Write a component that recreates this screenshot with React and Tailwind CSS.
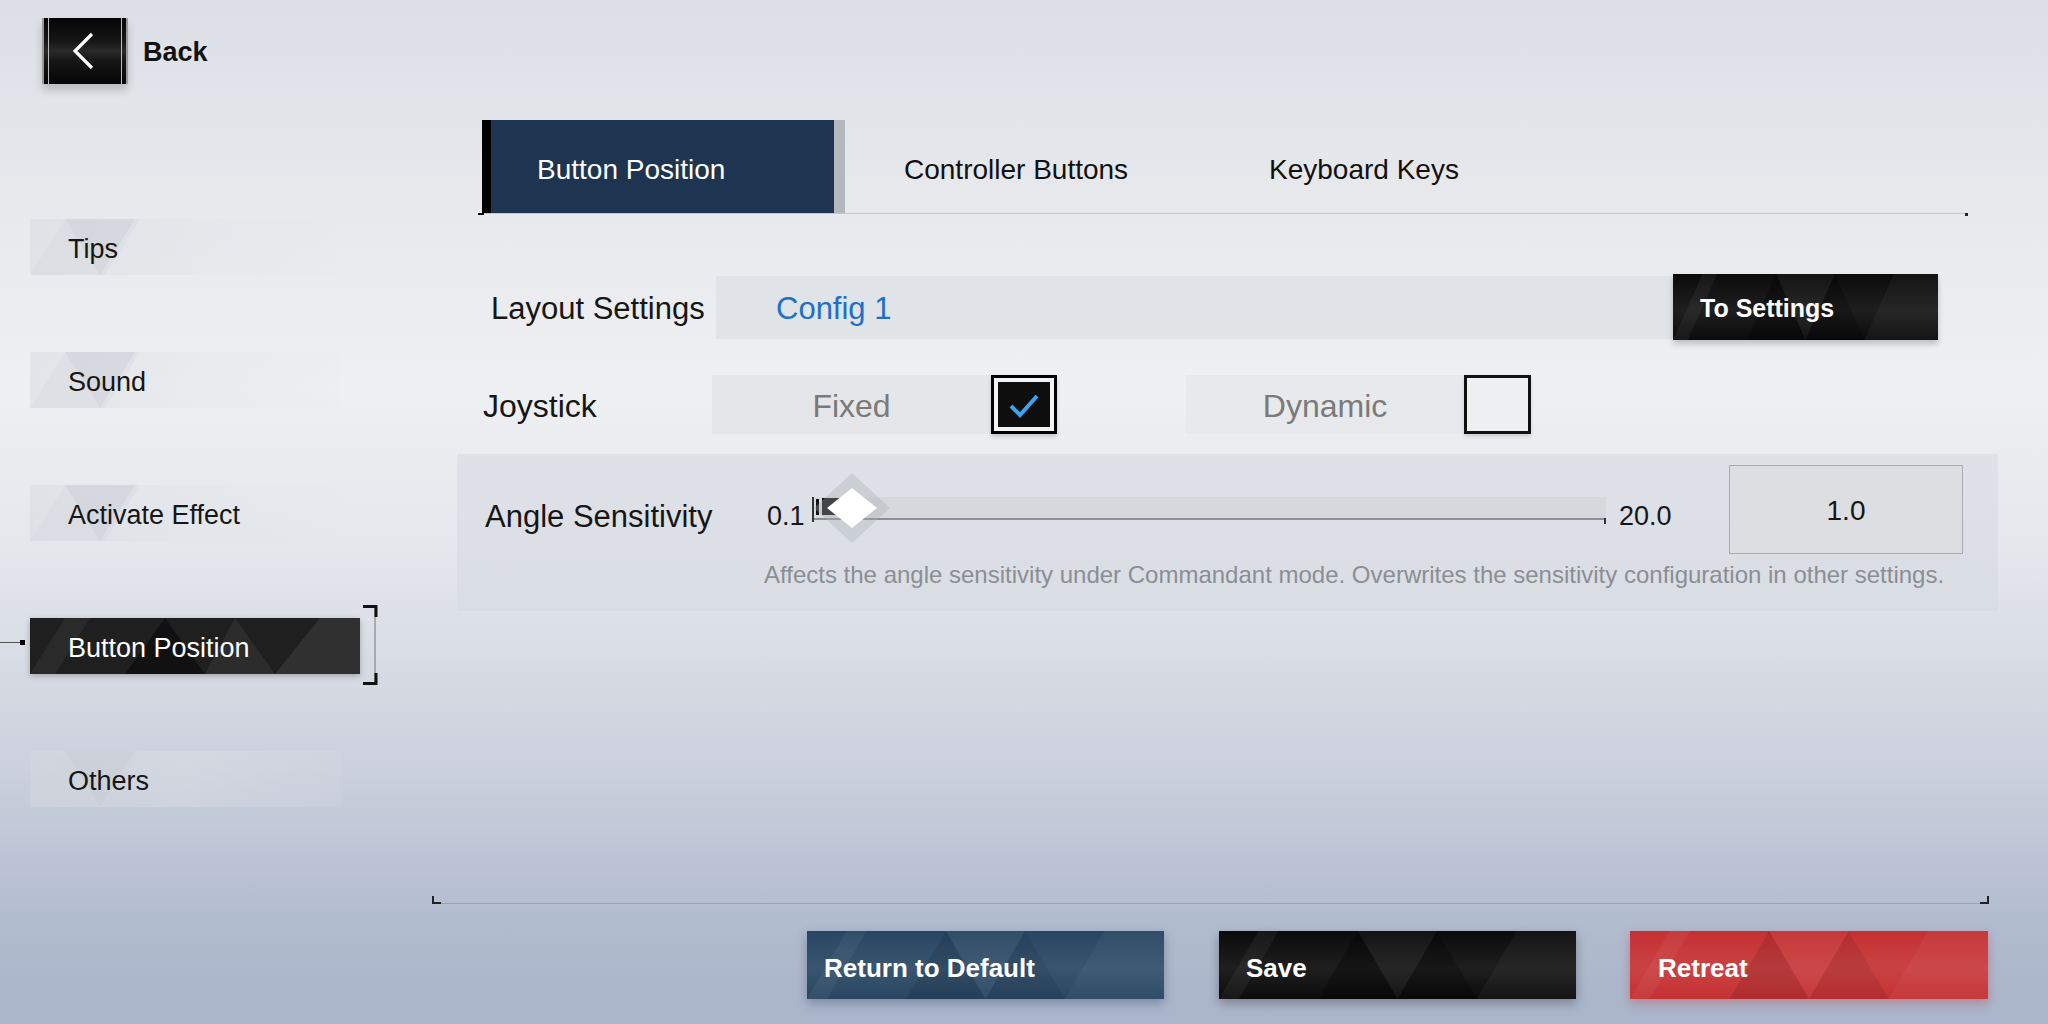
import React from "react";

const F = "font-['Liberation_Sans','Arial',sans-serif]";

function Tris({ variant = "dark" }) {
  const darkOp = variant === "dark" ? 0.28 : 0.1;
  const darkOp2 = variant === "dark" ? 0.22 : 0.08;
  return (
    <svg className="absolute inset-0 w-full h-full pointer-events-none" viewBox="0 0 360 68" preserveAspectRatio="none">
      <defs>
        <linearGradient id={"g" + variant} x1="0" y1="0" x2="0" y2="1">
          <stop offset="0" stopColor="#fff" stopOpacity="0" />
          <stop offset="0.55" stopColor="#fff" stopOpacity="0.08" />
          <stop offset="1" stopColor="#fff" stopOpacity="0" />
        </linearGradient>
      </defs>
      <rect x="0" y="0" width="360" height="68" fill={"url(#g" + variant + ")"} />
      <polygon points="0,68 40,0 60,0 20,68" fill="#fff" opacity="0.05" />
      <polygon points="100,68 140,0 180,68" fill="#000" opacity={darkOp} />
      <polygon points="180,68 220,0 260,68" fill="#000" opacity={darkOp2} />
      <polygon points="140,0 180,68 220,0" fill="#fff" opacity="0.04" />
      <polygon points="260,68 300,0 360,0 360,68" fill="#fff" opacity="0.04" />
    </svg>
  );
}

function SideItem({ label, active }) {
  if (active) {
    return (
      <div className="relative ml-[30px] w-[330px] h-[56px]">
        <div className="absolute left-[-30px] top-[24px] w-[20px] h-px bg-[#555]" />
        <div className="absolute left-[-10px] top-[22px] w-[5px] h-[5px] bg-black" />
        <div className="relative w-full h-full bg-[#1f1f1f] overflow-hidden flex items-center shadow-[0_2px_6px_rgba(0,0,0,0.25)]">
          <svg className="absolute inset-0 w-full h-full" viewBox="0 0 330 56" preserveAspectRatio="none">
            <polygon points="0,56 35,0 60,0 25,56" fill="#fff" opacity="0.05" />
            <polygon points="95,56 135,0 175,56" fill="#000" opacity="0.45" />
            <polygon points="175,56 205,0 245,56" fill="#fff" opacity="0.06" />
            <polygon points="245,56 290,0 330,0 330,56" fill="#fff" opacity="0.08" />
          </svg>
          <span className="relative pl-[38px] pt-[4px] text-[27px] leading-none text-white">{label}</span>
        </div>
        <svg className="absolute left-[332px] top-[-13px] w-[16px] h-[80px]" viewBox="0 0 16 80">
          <line x1="13" y1="1.5" x2="13" y2="78.5" stroke="#777" strokeWidth="1" />
          <polyline points="1,1.5 14,1.5 14,12" fill="none" stroke="#111" strokeWidth="3" />
          <polyline points="1,78.5 14,78.5 14,68" fill="none" stroke="#111" strokeWidth="3" />
        </svg>
      </div>
    );
  }
  return (
    <div className="relative ml-[30px] w-[312px] h-[56px] flex items-center bg-gradient-to-r from-[#d5d8de]/45 via-[#dfe2e6]/35 to-[#e5e7ea]/10">
      <svg className="absolute left-0 top-0 w-[110px] h-[56px]" viewBox="0 0 110 56" preserveAspectRatio="none">
        <polygon points="0,56 35,0 110,0 75,56" fill="#cfd3d9" opacity="0.3" />
        <polygon points="35,0 70,56 105,0" fill="#c4c8cf" opacity="0.3" />
      </svg>
      <span className="relative pl-[38px] pt-[4px] text-[27px] leading-none text-[#161616]">{label}</span>
    </div>
  );
}

function Checked() {
  return (
    <div className="w-[66px] h-[59px] border-[3px] border-black bg-[#f2f2f2] p-[4px] shadow-[0_3px_4px_rgba(0,0,0,0.15)]">
      <div className="w-full h-full bg-[#0e0e0e] flex items-center justify-center">
        <svg width="34" height="28" viewBox="0 0 34 28">
          <polyline points="4,15 13,24 30,5" fill="none" stroke="#3aa3f2" strokeWidth="4" />
        </svg>
      </div>
    </div>
  );
}

function Unchecked() {
  return <div className="w-[67px] h-[59px] border-[3px] border-[#111] bg-[#eef0f2] shadow-[0_3px_4px_rgba(0,0,0,0.12)]" />;
}

export default function App() {
  return (
    <div className={`relative w-[2048px] h-[1024px] overflow-hidden flex bg-[linear-gradient(180deg,#dcdfe6_0%,#e6e8ec_18%,#eef0f2_38%,#e3e6eb_55%,#cbd1dd_75%,#b2bccf_90%,#aab4ca_100%)] ${F}`}>
      {/* left column */}
      <div className="w-[432px] flex flex-col">
        <div className="flex items-center pt-[18px] pl-[42px]">
          <div className="relative w-[86px] h-[66px] bg-[linear-gradient(180deg,#050505_0%,#161616_35%,#2a2a2a_50%,#161616_65%,#050505_100%)] border-x-2 border-[#9a9a9a] shadow-[0_6px_8px_rgba(0,0,0,0.18)] flex items-center justify-center">
            <div className="absolute left-[4px] top-0 bottom-0 w-px bg-[#bdbdbd]" />
            <div className="absolute right-[4px] top-0 bottom-0 w-px bg-[#bdbdbd]" />
            <svg width="30" height="40" viewBox="0 0 30 40">
              <polyline points="22,3 5,20 22,37" fill="none" stroke="#fff" strokeWidth="3.2" />
            </svg>
          </div>
          <span className="ml-[15px] pt-[3px] text-[27px] leading-none font-bold text-[#111]">Back</span>
        </div>
        <div className="mt-[135px] flex flex-col gap-[77px]">
          <SideItem label="Tips" />
          <SideItem label="Sound" />
          <SideItem label="Activate Effect" />
          <SideItem label="Button Position" active />
          <SideItem label="Others" />
        </div>
      </div>

      {/* right column */}
      <div className="w-[1568px] flex flex-col pt-[120px]">
        {/* tabs */}
        <div className="relative ml-[50px] w-[1486px] flex h-[94px] border-b border-[#c3c7ce]">
          <div className="absolute left-[-4px] bottom-[-2px] w-[6px] h-[2px] bg-black" />
          <div className="absolute right-0 bottom-[-3px] w-[3px] h-[3px] bg-[#222]" />
          <div className="flex h-full">
            <div className="w-[9px] bg-black" />
            <div className="w-[343px] bg-[#1d3551] flex items-center pl-[46px]">
              <span className="pt-[6px] text-[28px] leading-none text-white">Button Position</span>
            </div>
            <div className="w-[11px] bg-[#b3b7be]" />
          </div>
          <div className="w-[365px] flex items-center pl-[59px]">
            <span className="pt-[6px] text-[28px] leading-none text-[#111]">Controller Buttons</span>
          </div>
          <div className="w-[365px] flex items-center pl-[59px]">
            <span className="pt-[6px] text-[28px] leading-none text-[#111]">Keyboard Keys</span>
          </div>
        </div>

        {/* layout settings */}
        <div className="mt-[60px] ml-[59px] w-[1447px] h-[66px] flex items-center">
          <div className="w-[225px] pt-[3px] whitespace-nowrap text-[31px] leading-none text-[#161616]">Layout Settings</div>
          <div className="flex-1 h-[63px] bg-[#dfe2e6]/90 flex items-center pl-[60px]">
            <span className="pt-[3px] text-[31px] leading-none text-[#1f6fc6]">Config 1</span>
          </div>
          <div className="relative w-[265px] h-[66px] -ml-[3px] bg-[#0b0b0b] overflow-hidden flex items-center shadow-[0_4px_6px_rgba(0,0,0,0.2)]">
            <Tris />
            <span className="relative pl-[27px] pt-[3px] text-[25px] leading-none font-bold text-white">To Settings</span>
          </div>
        </div>

        {/* joystick */}
        <div className="mt-[35px] ml-[51px] h-[59px] flex items-center">
          <div className="w-[229px] pt-[3px] text-[32px] leading-none text-[#161616]">Joystick</div>
          <div className="w-[279px] h-[59px] bg-[#e4e6e9] flex items-center justify-center">
            <span className="pt-[3px] text-[32px] leading-none text-[#7a7a7a]">Fixed</span>
          </div>
          <Checked />
          <div className="ml-[129px] w-[278px] h-[59px] bg-[#e7e9ec] flex items-center justify-center">
            <span className="pt-[3px] text-[32px] leading-none text-[#7a7a7a]">Dynamic</span>
          </div>
          <Unchecked />
        </div>

        {/* angle sensitivity panel */}
        <div className="mt-[20px] ml-[25px] w-[1541px] h-[157px] bg-[#d4d8df]/50 flex flex-col pt-[11px]">
          <div className="flex items-center h-[89px]">
            <div className="w-[310px] pl-[28px] mt-[14px] whitespace-nowrap text-[31px] leading-none text-[#161616]">Angle Sensitivity</div>
            <div className="w-[45px] mt-[14px] text-[27px] leading-none text-[#161616]">0.1</div>
            <div className="relative w-[794px] h-[25px]">
              <div className="absolute left-0 right-0 top-0 h-[21px] bg-[#d7d8db]" />
              <div className="absolute left-0 right-0 top-[21px] h-[2px] bg-[#8c8f95]" />
              <div className="absolute left-0 top-0 w-[2px] h-[25px] bg-[#333]" />
              <div className="absolute right-0 top-[21px] w-[2px] h-[6px] bg-[#333]" />
              <div className="absolute left-[4px] top-[2px] w-[3px] h-[16px] bg-[#111]" />
              <div className="absolute left-[10px] top-[1px] w-[20px] h-[17px] bg-[#0c0c0c]" />
              <div className="absolute left-[2px] top-[-24px] w-[76px] h-[70px] bg-[#aaaeb5]/35 [clip-path:polygon(50%_0,100%_50%,50%_100%,0_50%)]" />
              <div className="absolute left-[15px] top-[-9px] w-[50px] h-[40px] bg-white [clip-path:polygon(50%_0,100%_50%,50%_100%,0_50%)]" />
            </div>
            <div className="w-[123px] pl-[13px] mt-[14px] text-[27px] leading-none text-[#161616]">20.0</div>
            <div className="w-[234px] h-[89px] border border-[#a8abb1] bg-[#dcdee2] flex items-center justify-center">
              <span className="pt-[3px] text-[28px] leading-none text-[#161616]">1.0</span>
            </div>
          </div>
          <div className="mt-[9px] pl-[307px] whitespace-nowrap text-[24px] leading-[24px] text-[#8b8e93]">
            Affects the angle sensitivity under Commandant mode. Overwrites the sensitivity configuration in other settings.
          </div>
        </div>

        {/* frame line */}
        <div className="relative mt-[285px] w-[1557px] h-[8px] border-b border-[#9aa3b6]">
          <div className="absolute left-0 top-0 w-[2px] h-[8px] bg-[#222]" />
          <div className="absolute left-0 bottom-[-1px] w-[9px] h-[2px] bg-[#222]" />
          <div className="absolute right-0 top-0 w-[2px] h-[8px] bg-[#222]" />
          <div className="absolute right-0 bottom-[-1px] w-[9px] h-[2px] bg-[#222]" />
        </div>

        {/* bottom buttons */}
        <div className="mt-[27px] ml-[375px] flex">
          <div className="relative w-[357px] h-[68px] bg-[#284663] overflow-hidden flex items-center shadow-[0_4px_10px_rgba(30,50,80,0.35)]">
            <Tris variant="navy" />
            <span className="relative pl-[17px] pt-[6px] text-[26px] leading-none font-bold text-white">Return to Default</span>
          </div>
          <div className="relative ml-[55px] w-[357px] h-[68px] bg-[#0b0b0b] overflow-hidden flex items-center shadow-[0_4px_10px_rgba(0,0,0,0.3)]">
            <Tris />
            <span className="relative pl-[27px] pt-[6px] text-[26px] leading-none font-bold text-white">Save</span>
          </div>
          <div className="relative ml-[54px] w-[358px] h-[68px] bg-[#c53133] overflow-hidden flex items-center shadow-[0_4px_10px_rgba(180,40,40,0.35)]">
            <Tris variant="red" />
            <span className="relative pl-[28px] pt-[6px] text-[26px] leading-none font-bold text-white">Retreat</span>
          </div>
        </div>
      </div>
    </div>
  );
}
